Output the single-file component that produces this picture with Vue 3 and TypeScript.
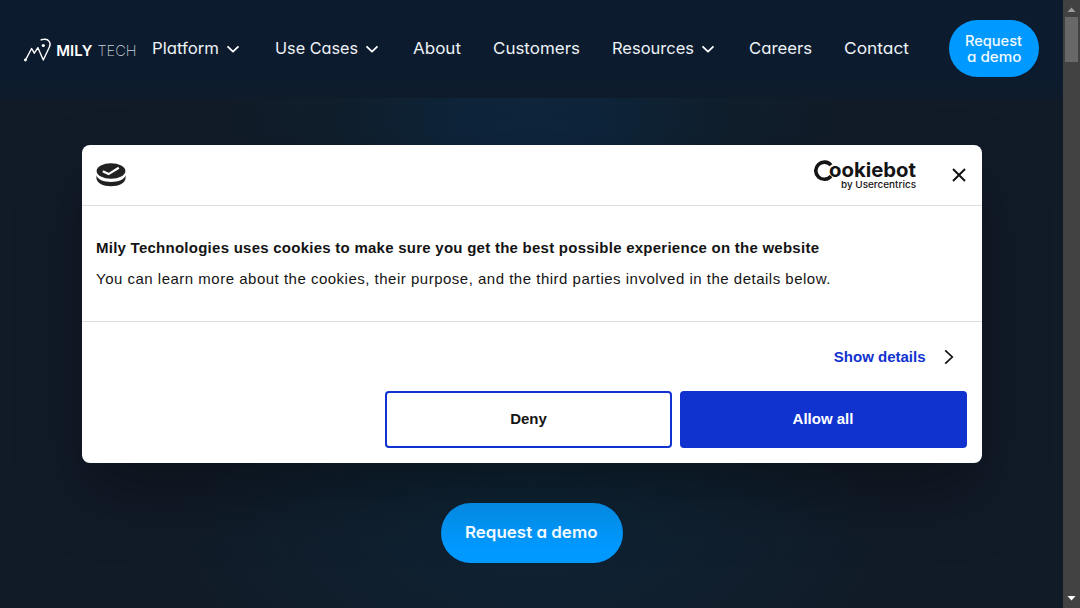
<script setup lang="ts">
interface NavItem {
  label: string
  width: number
  menu?: boolean
}

const navItems: NavItem[] = [
  { label: 'Platform', width: 67, menu: true },
  { label: 'Use Cases', width: 83, menu: true },
  { label: 'About', width: 48 },
  { label: 'Customers', width: 87 },
  { label: 'Resources', width: 82, menu: true },
  { label: 'Careers', width: 63 },
  { label: 'Contact', width: 65 },
]
</script>

<template>
  <div class="window">
    <div class="page">
      <header class="header">
        <a class="logo">
          <svg width="116" height="30" viewBox="0 0 116 30">
            <g fill="none" stroke="#fff" stroke-width="1.4" stroke-linejoin="round" stroke-linecap="round">
              <path d="M2.6 21.8 8.6 10.5 11.3 15.2 14.9 9.7 20.3 22 26.3 9.3C28.6 4.5 25.4.8 21.1 1.3 19.8 1.4 18.8 1.5 18.1 1.9" />
            </g>
            <circle cx="2.4" cy="22" r="1.4" fill="#fff" />
            <circle cx="20.3" cy="7.5" r="1.6" fill="#fff" />
            <text class="logo-bold" x="33.3" y="18" textLength="36" lengthAdjust="spacingAndGlyphs">MILY</text>
            <text class="logo-thin" x="74.5" y="18" textLength="39" lengthAdjust="spacingAndGlyphs">TECH</text>
          </svg>
        </a>
        <nav class="nav">
          <a v-for="item in navItems" :key="item.label" class="nav-item">
            <svg class="label" :width="item.width" height="24">
              <text x="0" y="17" :textLength="item.width" lengthAdjust="spacingAndGlyphs">{{ item.label }}</text>
            </svg>
            <svg v-if="item.menu" class="chevron" width="14" height="8" viewBox="0 0 14 8">
              <path d="M1.5 1.3 7 6.6 12.5 1.3" fill="none" stroke="#fff" stroke-width="1.8" stroke-linejoin="round" />
            </svg>
          </a>
        </nav>
        <button class="demo-small">
          <svg width="90" height="57">
            <text x="16" y="26" textLength="57" lengthAdjust="spacingAndGlyphs">Request</text>
            <text x="18" y="42" textLength="54.5" lengthAdjust="spacingAndGlyphs">a demo</text>
          </svg>
        </button>
      </header>

      <main class="hero">
        <section class="dialog">
          <div class="dialog-head">
            <svg class="cookie" width="30" height="24" viewBox="0 0 30 24">
              <path d="M.4 12.2C1.5 16.4 7.5 18.9 15 18.9S28.5 16.4 29.6 12.2V14.8C29.6 19.8 23 23.3 15 23.3S.4 19.8 .4 14.8Z" fill="#212121" />
              <ellipse cx="15" cy="8" rx="14.4" ry="7.8" fill="#212121" />
              <path d="M6.8 8.2 12.6 11.1 22.8 4.8" fill="none" stroke="#fff" stroke-width="2.2" />
            </svg>
            <svg class="brand" width="104" height="42" viewBox="0 0 104 42">
              <path d="M17 11.2A8.6 8.6 0 1 0 17 22.2" fill="none" stroke="#141414" stroke-width="3.6" />
              <text class="brand-name" x="15" y="22.6" textLength="87" lengthAdjust="spacingAndGlyphs">ookiebot</text>
              <text class="brand-sub" x="27" y="34" textLength="75" lengthAdjust="spacingAndGlyphs">by Usercentrics</text>
            </svg>
            <svg class="close" width="14" height="14" viewBox="0 0 14 14">
              <path d="M1 1 13 13M13 1 1 13" stroke="#141414" stroke-width="2" />
            </svg>
          </div>
          <div class="dialog-body">
            <h2>Mily Technologies uses cookies to make sure you get the best possible experience on the website</h2>
            <p>You can learn more about the cookies, their purpose, and the third parties involved in the details below.</p>
          </div>
          <div class="dialog-foot">
            <a class="details">
              <span>Show details</span>
              <svg width="10" height="16" viewBox="0 0 10 16">
                <path d="M1.2 1.3 8.3 8 1.2 14.7" fill="none" stroke="#141414" stroke-width="1.7" />
              </svg>
            </a>
            <div class="actions">
              <button class="action deny">Deny</button>
              <button class="action allow">Allow all</button>
            </div>
          </div>
        </section>
        <button class="demo-large">
          <svg width="182" height="60">
            <text x="24" y="35" textLength="132.5" lengthAdjust="spacingAndGlyphs">Request a demo</text>
          </svg>
        </button>
      </main>
    </div>

    <aside class="scrollbar">
      <svg width="9" height="5" viewBox="0 0 9 5"><path d="M.5 5 4.5.5 8.5 5Z" fill="#9c9c9c" /></svg>
      <span class="thumb"></span>
      <svg class="down" width="9" height="5" viewBox="0 0 9 5"><path d="M.5 0H8.5L4.5 4.5Z" fill="#fff" /></svg>
    </aside>
  </div>
</template>

<style>
body {
  margin: 0;
  overflow: hidden;
}
</style>

<style scoped>
* {
  box-sizing: border-box;
}
.window {
  display: flex;
  width: 1080px;
  height: 608px;
  overflow: hidden;
  font-family: "Liberation Sans", Arial, sans-serif;
}
.page {
  width: 1063px;
  display: flex;
  flex-direction: column;
  background:
    radial-gradient(ellipse 310px 360px at 532px 170px, #0e263e 0%, #0e2439 28%, rgba(15, 31, 45, 0.75) 65%, transparent 100%),
    radial-gradient(ellipse 350px 210px at 532px 510px, #0e2436 0%, transparent 100%),
    #111b28;
}
svg {
  display: block;
  flex: none;
}
button {
  border: 0;
  padding: 0;
  margin: 0;
}
.header {
  height: 98px;
  flex: none;
  display: flex;
  align-items: flex-start;
  padding: 20px 24px 0 23px;
  background: linear-gradient(#0c1b2e 75%, #0d1b2b);
}
.logo {
  width: 129px;
  padding-top: 18px;
}
.logo text {
  font-family: Inter, sans-serif;
  font-size: 15px;
  fill: #fff;
}
.logo .logo-bold {
  font-weight: 600;
}
.logo .logo-thin {
  font-weight: 200;
  fill: #c9d1da;
}
.nav {
  display: flex;
  gap: 31.7px;
  padding-top: 17px;
}
.nav-item {
  display: flex;
  align-items: center;
}
.label {
  overflow: visible;
}
.label text {
  font-family: Inter, sans-serif;
  font-size: 16.4px;
  font-feature-settings: "cv11";
  fill: #eef2f6;
}
.chevron {
  margin: 0 3px 0 7px;
}
.demo-small {
  width: 90px;
  height: 57px;
  margin-left: auto;
  border-radius: 29px;
  background: #0099ff;
}
.demo-small text,
.demo-large text {
  font-family: Inter, sans-serif;
  font-feature-settings: "cv11";
  font-weight: 500;
  font-size: 14.4px;
  fill: #f2faff;
}
.hero {
  flex: 1;
  display: flex;
  flex-direction: column;
  align-items: center;
  padding-top: 47px;
}
.dialog {
  width: 900px;
  height: 318px;
  flex: none;
  border-radius: 8px;
  background: #fff;
  color: #141414;
  box-shadow: 0 32px 68px rgba(0, 0, 0, 0.3);
}
.dialog-head {
  height: 61px;
  display: flex;
  align-items: center;
  padding: 0 15.5px 0 14px;
  border-bottom: 1px solid #dedede;
}
.brand {
  margin-left: auto;
}
.brand text {
  font-family: Inter, sans-serif;
  fill: #141414;
}
.brand .brand-name {
  font-size: 20px;
  font-weight: 700;
}
.brand .brand-sub {
  font-size: 9.5px;
  font-weight: 500;
}
.close {
  margin-left: 34px;
}
.dialog-body {
  height: 116px;
  padding: 30px 14.5px 0;
  border-bottom: 1px solid #dedede;
}
h2 {
  margin: 0;
  font-size: 15px;
  line-height: 24px;
  letter-spacing: 0.254px;
  white-space: nowrap;
}
p {
  margin: 7px 0 0;
  font-size: 15px;
  line-height: 24px;
  letter-spacing: 0.5px;
  white-space: nowrap;
}
.dialog-foot {
  padding: 22.5px 15px 0;
}
.details {
  display: flex;
  justify-content: flex-end;
  align-items: center;
  gap: 18.5px;
  height: 24px;
  padding-right: 12.5px;
  color: #1032cf;
  font-size: 15px;
  font-weight: 700;
}
.details span {
  padding-bottom: 1px;
}
.actions {
  display: flex;
  justify-content: flex-end;
  gap: 7.5px;
  margin-top: 22.5px;
}
.action {
  width: 287px;
  height: 57px;
  padding-bottom: 2px;
  border: 2px solid #1032cf;
  border-radius: 4px;
  font: 700 15px "Liberation Sans", Arial, sans-serif;
}
.deny {
  background: #fff;
  color: #141414;
}
.allow {
  background: #1032cf;
  color: #fff;
}
.demo-large {
  width: 182px;
  height: 60px;
  flex: none;
  margin-top: 40px;
  border-radius: 30px;
  background: linear-gradient(#0488df, #0099ff 75%);
}
.demo-large text {
  font-size: 16.4px;
  font-weight: 600;
}
.scrollbar {
  width: 17px;
  display: flex;
  flex-direction: column;
  align-items: center;
  padding: 7px 0;
  background: #424242;
}
.thumb {
  width: 13px;
  height: 45px;
  margin-top: 5px;
  background: #686868;
}
.down {
  margin-top: auto;
}
</style>
